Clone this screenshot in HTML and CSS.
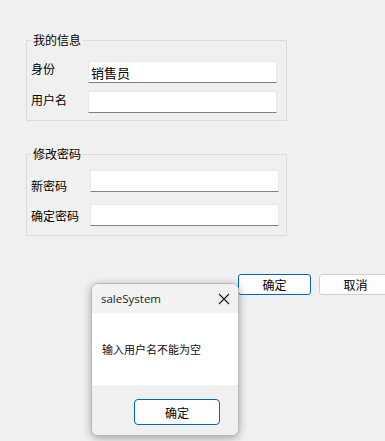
FILE: index.html
```html
<!DOCTYPE html>
<html lang="zh">
<head>
  <meta charset="utf-8">
  <link rel="stylesheet" href="styles.css">
  <title>saleSystem</title>
</head>
<body>
  <fieldset class="group group-info">
    <legend>我的信息</legend>
    <div class="rows">
      <div class="row row-role">
        <label for="role">身份</label>
        <input type="text" id="role" value="销售员" readonly>
      </div>
      <div class="row row-user">
        <label for="user">用户名</label>
        <input type="text" id="user">
      </div>
    </div>
  </fieldset>

  <fieldset class="group group-pwd">
    <legend>修改密码</legend>
    <div class="rows">
      <div class="row row-new">
        <label for="pwd_new">新密码</label>
        <input type="password" id="pwd_new">
      </div>
      <div class="row">
        <label for="pwd_ok">确定密码</label>
        <input type="password" id="pwd_ok">
      </div>
    </div>
  </fieldset>

  <div class="actions">
    <button class="btn btn-default">确定</button>
    <button class="btn">取消</button>
  </div>

  <div class="dialog">
    <div class="dialog-title">
      <span>saleSystem</span>
      <svg class="close" width="12" height="12" viewBox="0 0 12 12">
        <path d="M1 1 L11 11 M11 1 L1 11" stroke="#1a1a1a" stroke-width="1.1" fill="none"/>
      </svg>
    </div>
    <div class="dialog-body">输入用户名不能为空</div>
    <div class="dialog-foot">
      <button class="btn btn-default btn-dialog">确定</button>
    </div>
  </div>
</body>
</html>
```

FILE: styles.css
```css
body {
  margin: 0;
  background: #f0f0f0;
  font-family: "Noto Sans CJK SC", "Noto Sans", sans-serif;
  font-size: 12px;
  color: #000;
  position: relative;
  height: 441px;
  overflow: hidden;
}

.group {
  margin: 0 0 0 26px;
  padding: 0;
  width: 259px;
  border: 1px solid #dcdcdc;
}

.group legend {
  margin-left: 4px;
  padding: 0 2px;
  font-size: 12px;
  line-height: 14px;
}

.group-info {
  margin-top: 33px;
}
.group-info .rows {
  padding: 14px 0 7px;
  gap: 8px;
}

.group-pwd {
  margin-top: 26px;
}
.group-pwd .rows {
  padding: 9px 0 9px;
  gap: 12px;
}

.rows {
  display: flex;
  flex-direction: column;
}

.row {
  display: flex;
  align-items: center;
  height: 22px;
}

.row label {
  width: 57px;
  padding-left: 4px;
}

.row-role label {
  margin-top: -8px;
}
.row-user label {
  margin-top: -6px;
}
.row-user input {
  margin-left: -1px;
}

.group-pwd .row label {
  width: 59px;
}
.group-pwd .row-new label {
  margin-top: 8px;
}

.row input {
  box-sizing: border-box;
  width: 189px;
  height: 22px;
  margin: 0;
  padding: 1px 0 0 2px;
  background: #fff;
  border: 1px solid #e8e8e8;
  border-bottom-color: #808080;
  border-radius: 0;
  font-family: inherit;
  font-size: 13px;
  outline: none;
}

.actions {
  display: flex;
  gap: 8px;
  margin-top: 38px;
  padding-left: 238px;
}

.btn {
  box-sizing: border-box;
  width: 73px;
  height: 21px;
  padding: 0;
  background: #fdfdfd;
  border: 1px solid #d0d0d0;
  border-radius: 3px;
  font-family: inherit;
  font-size: 12px;
  color: #000;
  flex-shrink: 0;
}

.btn-default {
  border-color: #0067c0;
}

/* message box laid over the form */
.dialog {
  position: absolute;
  left: 91px;
  top: 283px;
  width: 148px;
  height: 153px;
  box-sizing: border-box;
  border: 1px solid #b9b9b9;
  border-radius: 7px;
  overflow: hidden;
  background: #fff;
  box-shadow: 0 2px 8px #00000055;
  display: flex;
  flex-direction: column;
}

.dialog-title {
  height: 29px;
  background: #f3f2f3;
  display: flex;
  align-items: center;
  justify-content: space-between;
  padding: 0 8px 0 9px;
  font-family: "Open Sans", "Noto Sans", sans-serif;
  font-size: 11.5px;
  color: #1a1a1a;
}

.dialog-title .close {
  margin-top: 1px;
}

.dialog-body {
  height: 72px;
  display: flex;
  align-items: center;
  padding-left: 10px;
  font-size: 11px;
  color: #111;
}

.dialog-foot {
  flex: 1;
  background: #f0f0f0;
  display: flex;
  justify-content: flex-end;
  padding: 14px 18px 0 0;
}

.btn-dialog {
  width: 86px;
  height: 26px;
  border-radius: 4px;
}
```
